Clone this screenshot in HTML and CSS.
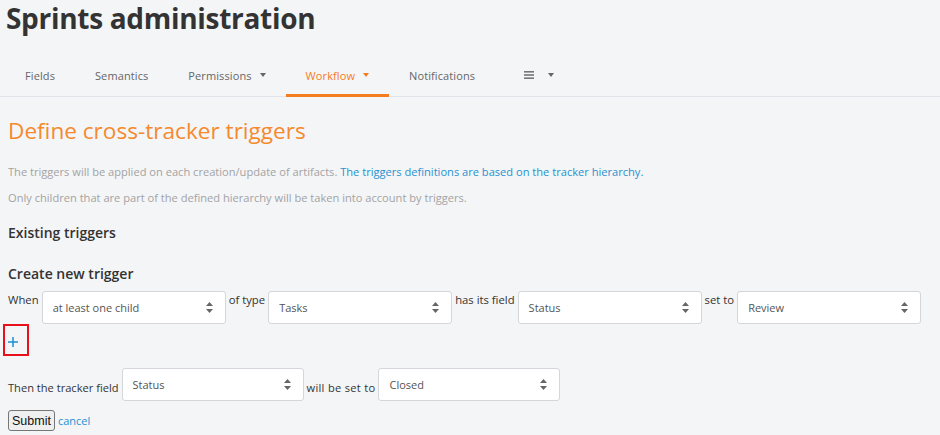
FILE: index.html
```html
<!DOCTYPE html>
<html lang="en">
<head>
<meta charset="utf-8">
<title>Sprints administration</title>
<link rel="stylesheet" href="styles.css">
</head>
<body>
<div class="page">
  <h1 class="title">Sprints administration</h1>
  <nav class="tabs">
    <a class="tab">Fields</a>
    <a class="tab">Semantics</a>
    <a class="tab">Permissions <span class="caret"></span></a>
    <a class="tab active">Workflow <span class="caret"></span></a>
    <a class="tab">Notifications</a>
    <a class="tab more">
      <svg class="burger" width="10" height="8" viewBox="0 0 10 8"><rect x="0" y="0" width="10" height="1.6" fill="#777"/><rect x="0" y="3.2" width="10" height="1.6" fill="#777"/><rect x="0" y="6.4" width="10" height="1.6" fill="#777"/></svg>
      <span class="caret"></span>
    </a>
  </nav>

  <section class="content">
    <h2 class="section-title">Define cross-tracker triggers</h2>
    <p class="info">The triggers will be applied on each creation/update of artifacts. <a class="link">The triggers definitions are based on the tracker hierarchy.</a></p>
    <p class="info">Only children that are part of the defined hierarchy will be taken into account by triggers.</p>

    <h3 class="sub-title existing">Existing triggers</h3>
    <h3 class="sub-title create">Create new trigger</h3>

    <div class="row row-top">
      <span class="label">When</span>
      <div class="select"><span>at least one child</span><svg class="arrows" width="7" height="11" viewBox="0 0 7 11"><path d="M3.5 0 L7 4 H0 Z M3.5 11 L7 7 H0 Z" fill="#666"/></svg></div>
      <span class="label">of type</span>
      <div class="select"><span>Tasks</span><svg class="arrows" width="7" height="11" viewBox="0 0 7 11"><path d="M3.5 0 L7 4 H0 Z M3.5 11 L7 7 H0 Z" fill="#666"/></svg></div>
      <span class="label">has its field</span>
      <div class="select"><span>Status</span><svg class="arrows" width="7" height="11" viewBox="0 0 7 11"><path d="M3.5 0 L7 4 H0 Z M3.5 11 L7 7 H0 Z" fill="#666"/></svg></div>
      <span class="label">set to</span>
      <div class="select"><span>Review</span><svg class="arrows" width="7" height="11" viewBox="0 0 7 11"><path d="M3.5 0 L7 4 H0 Z M3.5 11 L7 7 H0 Z" fill="#666"/></svg></div>
    </div>

    <div class="add-box">
      <svg width="10" height="10" viewBox="0 0 10 10"><path d="M5 0 V10 M0 5 H10" stroke="#1b8fd3" stroke-width="1.5"/></svg>
    </div>

    <div class="row row-then">
      <span class="label">Then the tracker field</span>
      <div class="select small"><span>Status</span><svg class="arrows" width="7" height="11" viewBox="0 0 7 11"><path d="M3.5 0 L7 4 H0 Z M3.5 11 L7 7 H0 Z" fill="#666"/></svg></div>
      <span class="label wide">will be set to</span>
      <div class="select small"><span>Closed</span><svg class="arrows" width="7" height="11" viewBox="0 0 7 11"><path d="M3.5 0 L7 4 H0 Z M3.5 11 L7 7 H0 Z" fill="#666"/></svg></div>
    </div>

    <div class="actions">
      <button class="submit" type="button">Submit</button>
      <a class="link cancel">cancel</a>
    </div>
  </section>
</div>
</body>
</html>
```

FILE: styles.css
```css
* { box-sizing: border-box; }
html, body { margin: 0; padding: 0; }
body {
  background: #f4f5f7;
  font-family: "Open Sans", "Noto Sans", sans-serif;
  color: #333;
  width: 940px;
  height: 435px;
  overflow: hidden;
}
.page { padding: 0 8px; }
.title {
  margin: 0;
  font-size: 28px;
  line-height: 36px;
  font-weight: 700;
  color: #333;
  margin-left: -2px;
  letter-spacing: -0.3px;
}
.tabs {
  display: flex;
  margin: 20px -8px 0;
  padding-left: 5px;
  border-bottom: 1px solid #e1e4ea;
  height: 41px;
}
.tab {
  display: flex;
  align-items: center;
  gap: 8px;
  padding: 0 20px;
  font-size: 11px;
  letter-spacing: 0.1px;
  color: #666;
  border-bottom: 3px solid transparent;
  margin-bottom: -1px;
}
.tab.active { color: #f57c1f; border-bottom-color: #f57c1f; }
.tab.more { padding-left: 29px; gap: 14px; }
.caret {
  display: inline-block;
  width: 0; height: 0;
  border-left: 3.5px solid transparent;
  border-right: 3.5px solid transparent;
  border-top: 4px solid #666;
}
.tab.active .caret { border-top-color: #f57c1f; }
.section-title {
  margin: 19px 0 0;
  font-size: 22.6px;
  line-height: 30px;
  font-weight: 400;
  color: #f58a2d;
}
.info {
  margin: 19px 0 0;
  font-size: 11.1px;
  line-height: 14px;
  color: #a3a3a3;
}
.info + .info { margin-top: 12px; }
.link { color: #2592d0; }
.sub-title {
  margin: 0;
  font-size: 14px;
  line-height: 18px;
  font-weight: 600;
  color: #333;
}
.existing { margin-top: 19px; }
.create { margin-top: 23px; }
.row {
  display: flex;
  gap: 3px;
  font-size: 11.3px;
  color: #333;
}
.row-top { margin-top: 8px; align-items: flex-start; }
.row-top .label { padding-top: 1px; line-height: 16px; }
.row-then { margin-top: 12px; align-items: center; font-size: 11.1px; }
.row-then .label { padding-top: 6px; }
.label.wide { letter-spacing: 0.3px; }
.select {
  display: flex;
  align-items: center;
  justify-content: space-between;
  width: 184px;
  height: 33px;
  background: #fff;
  border: 1px solid #d4d6db;
  border-radius: 3px;
  padding: 0 12px 0 10px;
  font-size: 11px;
  letter-spacing: 0;
  color: #555;
}
.select.small { width: 182px; }
.row-then .select span { margin-top: -1px; }
.arrows { flex: none; }
.add-box {
  width: 26px;
  height: 32px;
  margin-left: -5px;
  border: 2px solid #e8101a;
  display: flex;
  align-items: center;
  justify-content: flex-start;
  padding: 4px 0 0 3px;
}
.actions {
  margin-top: 9px;
  display: flex;
  align-items: center;
  gap: 3px;
}
.submit {
  font-family: "Liberation Sans", Arial, sans-serif;
  font-size: 12.5px;
  color: #111;
  background: #efefef;
  border: 1px solid #767676;
  border-radius: 3px;
  padding: 1px 3px;
  height: 21px;
}
.cancel { font-size: 11px; }
```
